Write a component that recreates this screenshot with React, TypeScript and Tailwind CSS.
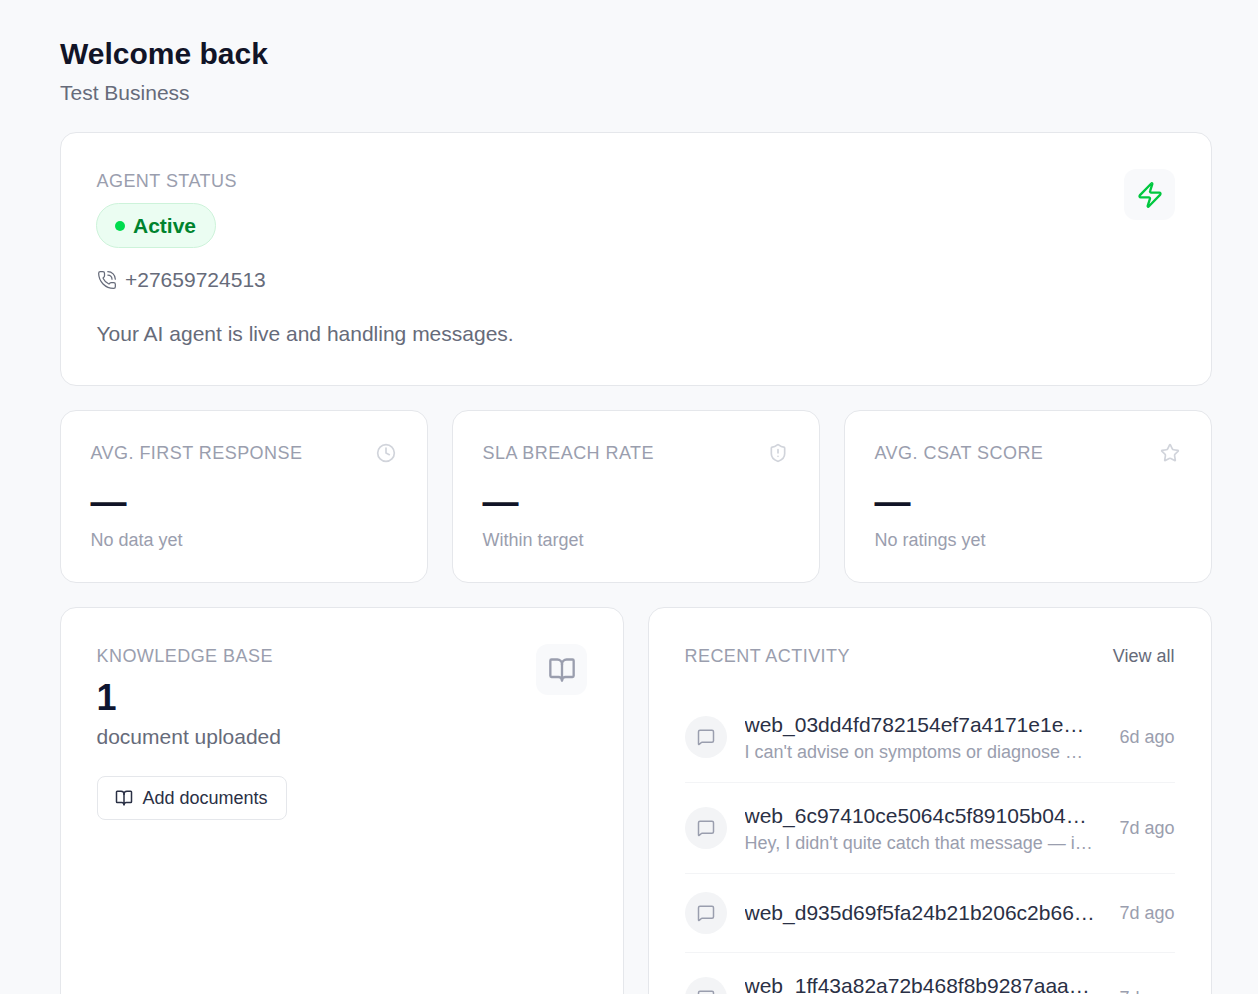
import { Zap, PhoneCall, Clock, ShieldAlert, Star, BookOpen, MessageSquare } from 'lucide-react';

const stats = [
  { label: 'Avg. First Response', note: 'No data yet', icon: Clock },
  { label: 'SLA Breach Rate', note: 'Within target', icon: ShieldAlert },
  { label: 'Avg. CSAT Score', note: 'No ratings yet', icon: Star },
];

const activity = [
  { id: 'web_03dd4fd782154ef7a4171e1e8c2f90ab', text: "I can't advise on symptoms or diagnose conditions, please see a doctor", when: '6d ago', textW: 'w-[340px]' },
  { id: 'web_6c97410ce5064c5f89105b04a1d2e7f3', text: "Hey, I didn't quite catch that message — if you could send it again", when: '7d ago', textW: 'w-[349px]' },
  { id: 'web_d935d69f5fa24b21b206c2b66e0a4d17', when: '7d ago' },
  { id: 'web_1ff43a82a72b468f8b9287aaa3c6d5e2', text: 'Thanks for reaching out', when: '7d ago', textW: 'w-[349px]' },
];

export default function App() {
  return (
    <div className="h-[994px] overflow-hidden bg-[#f8f9fb] pl-[60px] pt-[32px] font-['Liberation_Sans',Arial,sans-serif]">
      <div className="w-[1152px]">
        <h1 className="text-[30px] leading-[44px] font-bold text-[#111427]">Welcome back</h1>
        <p className="mt-[2px] text-[21px] leading-[29px] text-[#666b7a]">Test Business</p>

        <div className="mt-[25px] h-[254px] bg-white rounded-2xl border border-[#e5e7eb] pl-[35.5px] pr-[36px] py-[36px] flex justify-between items-start">
          <div>
            <p className="text-lg leading-[24px] uppercase tracking-[0.45px] text-[#9a9eae]">Agent Status</p>
            <div className="mt-[10px] -ml-[0.5px] w-[120px] h-[45px] rounded-full bg-[#ebfdf2] border border-[#cdf3da] flex items-center gap-[8px] pl-[18px]">
              <span className="w-[10px] h-[10px] rounded-full bg-[#00dc4e]" />
              <span className="text-[21px] font-bold text-[#00832e]">Active</span>
            </div>
            <div className="mt-[18px] flex items-center gap-[8.5px] text-[#666b7a]">
              <PhoneCall className="w-5 h-5" strokeWidth={1.5} />
              <span className="text-[21px] leading-[28px]">+27659724513</span>
            </div>
            <p className="mt-[26px] text-[21px] leading-[28px] text-[#666b7a]">Your AI agent is live and handling messages.</p>
          </div>
          <div className="w-[51px] h-[51px] rounded-xl bg-[#f8f9fb] flex items-center justify-center">
            <Zap className="w-7 h-7 text-[#00c83f]" strokeWidth={2} />
          </div>
        </div>

        <div className="mt-[24px] grid grid-cols-3 gap-[24px]">
          {stats.map((s) => (
            <div key={s.label} className="h-[173px] bg-white rounded-2xl border border-[#e5e7eb] pl-[29.5px] pr-[30.75px] pt-[30px]">
              <div className="flex justify-between items-center">
                <p className="text-lg leading-[24px] uppercase tracking-[0.45px] text-[#9a9eae]">{s.label}</p>
                <s.icon className="w-5 h-5 text-[#d1d4db]" strokeWidth={2} />
              </div>
              <p className="mt-[17px] text-[36px] leading-[40px] font-bold text-[#111427]">—</p>
              <p className="mt-[4px] text-lg leading-[28px] text-[#9a9eae]">{s.note}</p>
            </div>
          ))}
        </div>

        <div className="mt-[24px] grid grid-cols-2 gap-[24px]">
          <div className="h-[500px] bg-white rounded-2xl border border-[#e5e7eb] pl-[35.5px] pr-[36px] py-[36px] flex justify-between items-start">
            <div>
              <p className="text-lg leading-[24px] uppercase tracking-[0.45px] text-[#9a9eae]">Knowledge Base</p>
              <p className="mt-[10px] text-[36px] leading-[40px] font-bold text-[#0f1530]">1</p>
              <p className="mt-[5px] text-[21px] leading-[28px] text-[#666b7a]">document uploaded</p>
              <button className="mt-[25px] w-[190px] h-[44px] rounded-lg border border-[#e5e7eb] flex items-center justify-center gap-[9px] text-lg text-[#2a3045]">
                <BookOpen className="w-[18px] h-[18px]" strokeWidth={2} />
                Add documents
              </button>
            </div>
            <div className="w-[51px] h-[51px] rounded-xl bg-[#f8f9fb] flex items-center justify-center">
              <BookOpen className="w-7 h-7 text-[#9a9eae]" strokeWidth={2} />
            </div>
          </div>

          <div className="h-[500px] bg-white rounded-2xl border border-[#e5e7eb] pl-[35.5px] pr-[36.5px] py-[36px]">
            <div className="flex justify-between items-center">
              <p className="text-lg leading-[24px] uppercase tracking-[0.45px] text-[#9a9eae]">Recent Activity</p>
              <span className="text-lg leading-[24px] text-[#666b7a]">View all</span>
            </div>
            <div className="mt-[24px]">
              {activity.map((a) => (
                <div key={a.id} className={`flex items-center justify-between border-b border-[#f3f4f6] ${a.text ? 'h-[91px]' : 'h-[79px]'}`}>
                  <div className="flex items-center gap-[18px]">
                    <div className="w-[42px] h-[42px] rounded-full bg-[#f3f4f6] flex items-center justify-center">
                      <MessageSquare className="w-[18px] h-[18px] text-[#9a9eae]" strokeWidth={2} />
                    </div>
                    <div>
                      <p className="w-[351px] truncate text-[21px] leading-[28px] text-[#2a3045]">{a.id}</p>
                      {a.text && <p className={`${a.textW} mt-[1px] truncate text-lg leading-[24px] text-[#9a9eae]`}>{a.text}</p>}
                    </div>
                  </div>
                  <span className="text-lg text-[#9a9eae]">{a.when}</span>
                </div>
              ))}
            </div>
          </div>
        </div>
      </div>
    </div>
  );
}
